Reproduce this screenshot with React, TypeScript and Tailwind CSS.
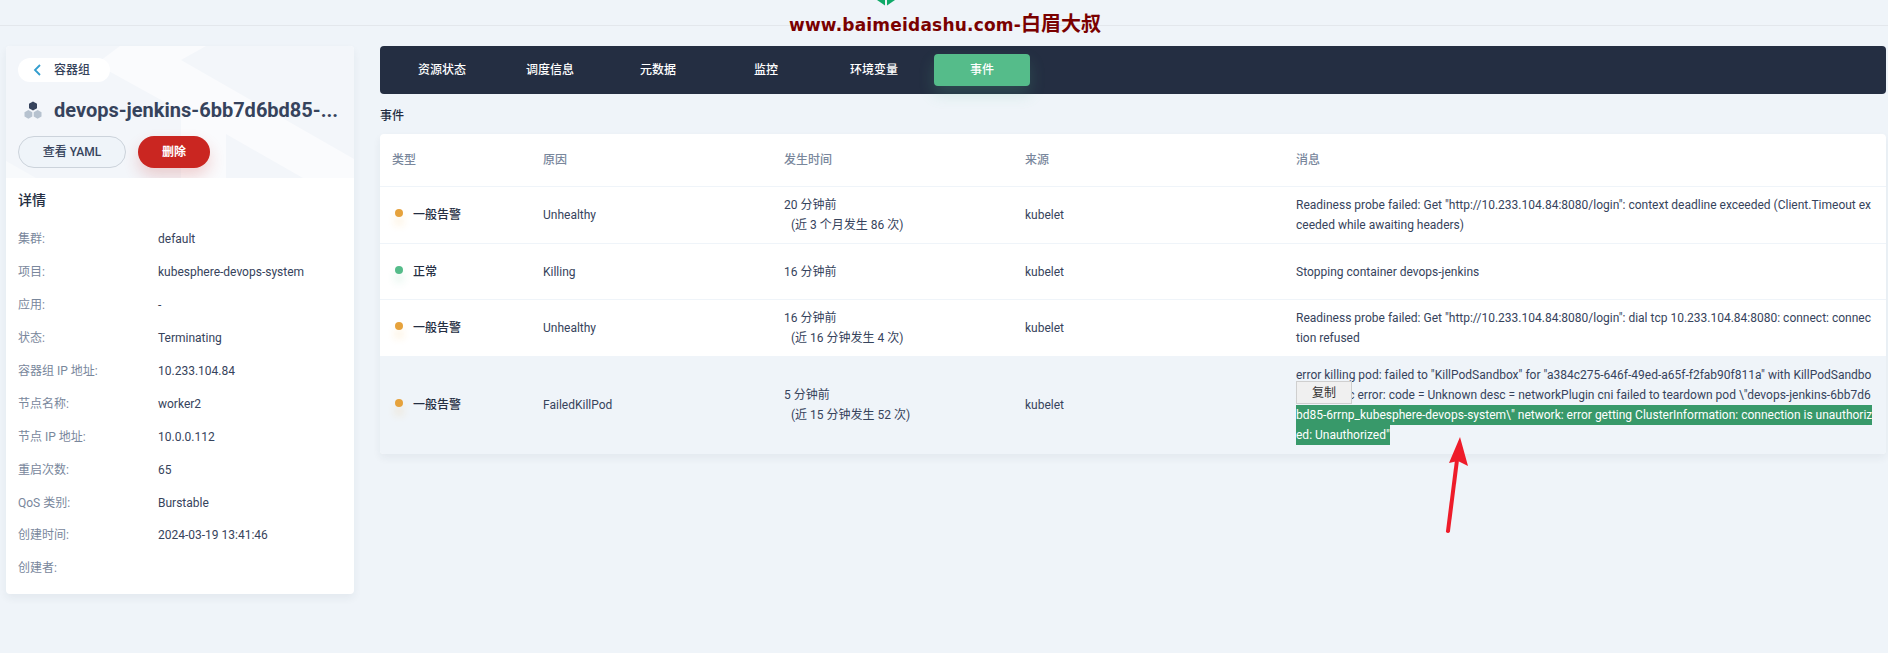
const font = { fontFamily: 'Roboto, "Noto Sans CJK SC", sans-serif' };

const details = [
  ["集群:", "default"],
  ["项目:", "kubesphere-devops-system"],
  ["应用:", "-"],
  ["状态:", "Terminating"],
  ["容器组 IP 地址:", "10.233.104.84"],
  ["节点名称:", "worker2"],
  ["节点 IP 地址:", "10.0.0.112"],
  ["重启次数:", "65"],
  ["QoS 类别:", "Burstable"],
  ["创建时间:", "2024-03-19 13:41:46"],
  ["创建者:", ""],
];

const tabs = ["资源状态", "调度信息", "元数据", "监控", "环境变量", "事件"];

function StatusDot({ ok, label }: { ok?: boolean; label: string }) {
  return (
    <div className="ml-[3px] flex items-center gap-[10px]">
      <span
        className={
          ok
            ? "mt-[-4px] size-2 rounded-full bg-[#55bc8a] shadow-[0_8px_8px_rgba(85,188,138,0.2)]"
            : "mt-[-4px] size-2 rounded-full bg-[#e6a23c] shadow-[0_8px_8px_rgba(245,166,35,0.2)]"
        }
      />
      <span className="font-medium text-[#242e42]">{label}</span>
    </div>
  );
}

function PodIcon() {
  return (
    <svg width="18" height="18" viewBox="0 0 18 18" className="shrink-0">
      <path d="M9 0.5l4 2.2v4.6l-4 2.2-4-2.2V2.7z" fill="#36435c" />
      <path d="M4.4 9l3.9 2.2v4.4l-3.9 2.2-3.9-2.2v-4.4z" fill="#b6c2cf" />
      <path d="M13.6 9l3.9 2.2v4.4l-3.9 2.2-3.9-2.2v-4.4z" fill="#b6c2cf" />
    </svg>
  );
}

function Sidebar() {
  return (
    <aside className="w-[348px] shrink-0 self-start overflow-hidden rounded-[4px] bg-white shadow-[0_4px_8px_0_rgba(36,46,66,0.06)]">
      <div className="relative h-[132px] overflow-hidden bg-[#f3f6fa] px-3 pt-3">
        <svg className="absolute inset-0" width="348" height="132" viewBox="0 0 348 132">
          <polygon
            points="114,0 200,0 175,14 348,113 348,132 297,132 220,88 220,132 175,132 175,65 90,18"
            fill="#fafbfd"
          />
          <polygon points="0,115 0,132 30,132" fill="#f8fafc" />
        </svg>
        <div className="relative">
          <div className="flex h-6 w-[92px] items-center rounded-full bg-white pl-[15px] text-xs font-medium text-[#36435c]">
            <svg width="8" height="12" viewBox="0 0 8 12" className="mr-[13px]">
              <path d="M7 1L2 6l5 5" fill="none" stroke="#329dce" strokeWidth="1.8" />
            </svg>
            容器组
          </div>
          <div className="mt-[18px] flex h-[20px] items-center gap-[12px] pl-1.5">
            <PodIcon />
            <span className="text-[20px] leading-none font-bold whitespace-nowrap text-[#36435c]">
              devops-jenkins-6bb7d6bd85-...
            </span>
          </div>
          <div className="mt-[16px] flex gap-3">
            <button className="h-8 w-[108px] rounded-full border border-[#ccd3db] bg-[#eff4f9] text-xs font-medium text-[#36435c]">
              查看 YAML
            </button>
            <button className="h-8 w-[72px] rounded-full bg-[#ca2621] text-xs font-semibold text-white shadow-[0_8px_16px_rgba(202,38,33,0.2)]">
              删除
            </button>
          </div>
        </div>
      </div>
      <div className="px-3 pt-3 pb-[9px]">
        <h3 className="text-sm leading-[20px] font-medium text-[#242e42]">详情</h3>
        <dl className="mt-[13px] text-xs">
          {details.map(([k, v]) => (
            <div key={k} className="flex h-[32.9px] items-center">
              <dt className="w-[140px] text-[#79879c]">{k}</dt>
              <dd className="text-[#36435c]">{v}</dd>
            </div>
          ))}
        </dl>
      </div>
    </aside>
  );
}

function Time({ ago, total }: { ago: string; total?: string }) {
  return (
    <>
      <div>{ago}</div>
      {total && <div className="pl-[7px]">{total}</div>}
    </>
  );
}

export default function App() {
  return (
    <div className="relative h-[653px] overflow-hidden bg-[#eff4f9] text-xs" style={font}>
      <div className="relative h-[46px]">
        <div className="absolute top-[25px] right-0 left-0 h-px bg-[#e3e7ec]" />
        <svg className="absolute top-0 left-[876px]" width="20" height="6" viewBox="0 0 20 6">
          <path d="M1 0h8v5.5z" fill="#0fa968" />
          <path d="M11 0h8l-8 5.5z" fill="#0fa968" />
        </svg>
        <div
          className="absolute top-[13px] left-[789px] text-[17px] leading-[22px] font-bold tracking-[0.2px] whitespace-nowrap text-[#7a0000]"
          style={{ fontFamily: '"DejaVu Sans", "Noto Sans CJK SC", sans-serif' }}
        >
          www.baimeidashu.com-<span className="text-[20px] tracking-normal">白眉大叔</span>
        </div>
      </div>

      <div className="flex gap-[26px] pr-[2px] pl-[6px]">
        <Sidebar />

        <main className="min-w-0 flex-1">
          <nav className="flex h-12 items-center gap-3 rounded-[4px] bg-[#242e42] pl-[14px]">
            {tabs.map((t) => (
              <div
                key={t}
                className={
                  t === "事件"
                    ? "flex h-8 w-24 items-center justify-center rounded-[4px] bg-[#55bc8a] font-medium text-white shadow-[0_8px_16px_rgba(85,188,138,0.2)]"
                    : "flex h-8 w-24 items-center justify-center font-medium text-white"
                }
              >
                {t}
              </div>
            ))}
          </nav>

          <h3 className="mt-3 text-xs leading-5 font-medium text-[#242e42]">事件</h3>

          <div className="mt-2 overflow-hidden rounded-[4px] bg-white shadow-[0_4px_8px_0_rgba(36,46,66,0.06)]">
            <table className="w-full table-fixed border-collapse text-left text-xs leading-5 text-[#36435c]">
              <colgroup>
                <col className="w-[163px]" />
                <col className="w-[241px]" />
                <col className="w-[241px]" />
                <col className="w-[271px]" />
                <col />
              </colgroup>
              <thead>
                <tr className="h-[52px] border-b border-[#eff4f9] text-[#79879c]">
                  <th className="pl-3 font-medium">类型</th>
                  <th className="font-medium">原因</th>
                  <th className="font-medium">发生时间</th>
                  <th className="font-medium">来源</th>
                  <th className="font-medium">消息</th>
                </tr>
              </thead>
              <tbody>
                <tr className="h-[57px] border-b border-[#eff4f9]">
                  <td className="pl-3"><StatusDot label="一般告警" /></td>
                  <td>Unhealthy</td>
                  <td><Time ago="20 分钟前" total="(近 3 个月发生 86 次)" /></td>
                  <td>kubelet</td>
                  <td className="pr-3 break-all">
                    Readiness probe failed: Get "http://10.233.104.84:8080/login": context deadline exceeded (Client.Timeout exceeded while awaiting headers)
                  </td>
                </tr>
                <tr className="h-[56px] border-b border-[#eff4f9] [&>td]:pt-[2px]">
                  <td className="pl-3"><StatusDot ok label="正常" /></td>
                  <td>Killing</td>
                  <td><Time ago="16 分钟前" /></td>
                  <td>kubelet</td>
                  <td className="pr-3 break-all">Stopping container devops-jenkins</td>
                </tr>
                <tr className="h-[57px]">
                  <td className="pl-3"><StatusDot label="一般告警" /></td>
                  <td>Unhealthy</td>
                  <td><Time ago="16 分钟前" total="(近 16 分钟发生 4 次)" /></td>
                  <td>kubelet</td>
                  <td className="pr-3 break-all">
                    Readiness probe failed: Get "http://10.233.104.84:8080/login": dial tcp 10.233.104.84:8080: connect: connection refused
                  </td>
                </tr>
                <tr className="h-[98px] bg-[#eff4f9]">
                  <td className="pl-3"><StatusDot label="一般告警" /></td>
                  <td>FailedKillPod</td>
                  <td><Time ago="5 分钟前" total="(近 15 分钟发生 52 次)" /></td>
                  <td>kubelet</td>
                  <td className="pr-3 break-all">
                    error killing pod: failed to "KillPodSandbox" for "a384c275-646f-49ed-a65f-f2fab90f811a" with KillPodSandboxError: "rpc error: code = Unknown desc = networkPlugin cni failed to teardown pod \"devops-jenkins-6bb7d6<span className="bg-[#38996a] py-[3px] text-white">bd85-6rrnp_kubesphere-devops-system\" network: error getting ClusterInformation: connection is unauthorized: Unauthorized"</span>
                  </td>
                </tr>
              </tbody>
            </table>
          </div>
        </main>
      </div>

      {/* 划词复制按钮 */}
      <button className="absolute top-[381px] left-[1296px] h-[23px] w-[56px] border border-[#cfcfcf] bg-[#f0f0f0] text-xs text-[#333]">
        复制
      </button>

      {/* 截图上的红色箭头 */}
      <svg className="absolute top-[430px] left-[1435px]" width="40" height="110" viewBox="0 0 40 110">
        <path d="M13 101L22 30" stroke="#ee1c2a" strokeWidth="4" strokeLinecap="round" fill="none" />
        <path d="M25 7L33 36 23 31 14 33z" fill="#ee1c2a" />
      </svg>
    </div>
  );
}
